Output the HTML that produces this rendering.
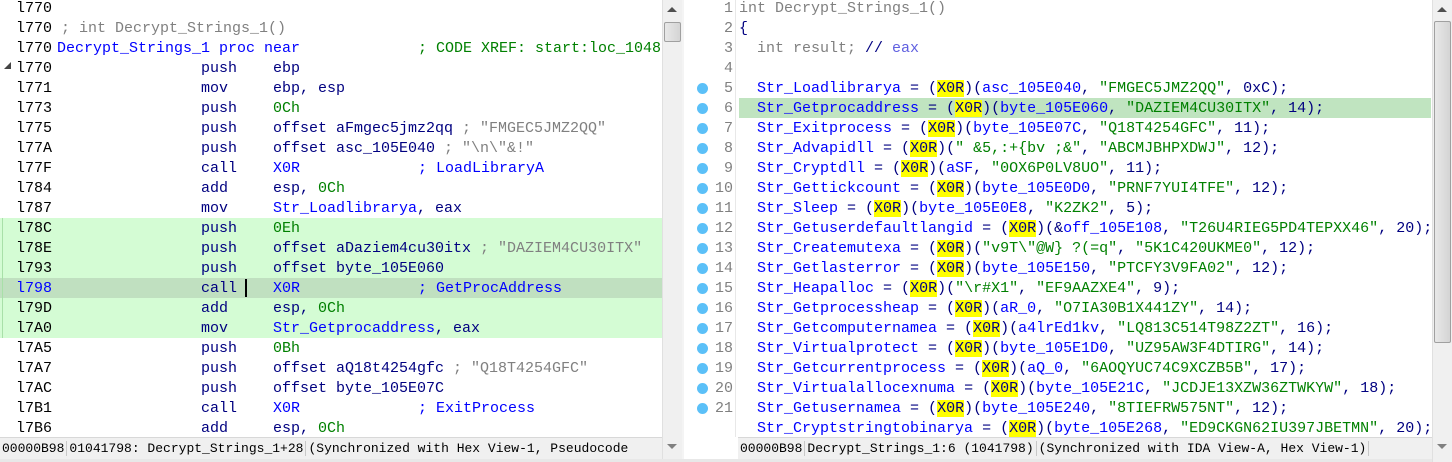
<!DOCTYPE html>
<html><head><meta charset="utf-8"><style>
*{margin:0;padding:0;box-sizing:border-box}
body{width:1452px;height:462px;overflow:hidden;background:#fff;position:relative;font-family:"Liberation Mono",monospace;font-size:15px}
.r{position:absolute;height:20px;line-height:22px;white-space:pre}
.L{position:absolute;left:0;width:662px;height:20px;line-height:22px;white-space:pre}
.L span{position:absolute}
.c1{left:16px}.c2{left:201px}.c3{left:273px}.c4{left:418px}
.m{color:#000080}
.b{color:#0000ff}
.g{color:#008000}
.gr{color:#808080}
.n{color:#000080}
.y{background:#ffff00;color:#000080}
.s{color:#008000}
.st{position:absolute;top:437px;height:22px;background:#f0f0f0;font-size:13px;line-height:22px;white-space:pre;color:#000;border-top:1px solid #d8d8d8}
.st span{border-right:1px solid #c8c8c8;padding:0 2px;position:static}
.dot{position:absolute;width:11px;height:11px;border-radius:50%;background:#5bc0f8;left:697px}
.ln{position:absolute;left:700px;width:33px;text-align:right;color:#808080;height:20px;line-height:22px}
</style></head><body>
<!-- left panel -->
<div style="position:absolute;left:0;top:218px;width:662px;height:120px;background:#d4fcd4"></div>
<div style="position:absolute;left:0;top:278px;width:662px;height:20px;background:#c0e0c0"></div>
<div style="position:absolute;left:2px;top:218px;width:1px;height:120px;background:#a8e0a8"></div>
<div class="L" style="top:-2px"><span class="c1">l770</span></div>
<div class="L" style="top:18px"><span class="c1">l770 <span class="gr" style="position:static">; int Decrypt_Strings_1()</span></span></div>
<div class="L" style="top:38px"><span class="c1">l770</span><span class="b" style="left:57px">Decrypt_Strings_1 proc near</span><span class="g c4">; CODE XREF: start:loc_1048</span></div>
<div style="position:absolute;left:4px;top:62px;width:0;height:0;border-left:7px solid transparent;border-bottom:7px solid #444"></div>
<div class="L" style="top:58px"><span class="c1">l770</span><span class="m c2">push</span><span class="m c3">ebp</span></div>
<div class="L" style="top:78px"><span class="c1">l771</span><span class="m c2">mov</span><span class="m c3">ebp, esp</span></div>
<div class="L" style="top:98px"><span class="c1">l773</span><span class="m c2">push</span><span class="g c3">0Ch</span></div>
<div class="L" style="top:118px"><span class="c1">l775</span><span class="m c2">push</span><span class="m c3">offset aFmgec5jmz2qq <span class="gr" style="position:static">; "FMGEC5JMZ2QQ"</span></span></div>
<div class="L" style="top:138px"><span class="c1">l77A</span><span class="m c2">push</span><span class="m c3">offset asc_105E040 <span class="gr" style="position:static">; "\n\"&amp;!"</span></span></div>
<div class="L" style="top:158px"><span class="c1">l77F</span><span class="m c2">call</span><span class="b c3">X0R</span><span class="b c4">; LoadLibraryA</span></div>
<div class="L" style="top:178px"><span class="c1">l784</span><span class="m c2">add</span><span class="m c3">esp, <span class="g" style="position:static">0Ch</span></span></div>
<div class="L" style="top:198px"><span class="c1">l787</span><span class="m c2">mov</span><span class="c3"><span class="b" style="position:static">Str_Loadlibrarya</span><span class="m" style="position:static">, eax</span></span></div>
<div class="L" style="top:218px"><span class="c1">l78C</span><span class="m c2">push</span><span class="g c3">0Eh</span></div>
<div class="L" style="top:238px"><span class="c1">l78E</span><span class="m c2">push</span><span class="m c3">offset aDaziem4cu30itx <span class="gr" style="position:static">; "DAZIEM4CU30ITX"</span></span></div>
<div class="L" style="top:258px"><span class="c1">l793</span><span class="m c2">push</span><span class="m c3">offset byte_105E060</span></div>
<div class="L" style="top:278px"><span class="c1 b">l798</span><span class="m c2">call</span><span class="b c3">X0R</span><span class="b c4">; GetProcAddress</span></div>
<div style="position:absolute;left:245px;top:279px;width:2px;height:18px;background:#000"></div>
<div class="L" style="top:298px"><span class="c1">l79D</span><span class="m c2">add</span><span class="m c3">esp, <span class="g" style="position:static">0Ch</span></span></div>
<div class="L" style="top:318px"><span class="c1">l7A0</span><span class="m c2">mov</span><span class="c3"><span class="b" style="position:static">Str_Getprocaddress</span><span class="m" style="position:static">, eax</span></span></div>
<div class="L" style="top:338px"><span class="c1">l7A5</span><span class="m c2">push</span><span class="g c3">0Bh</span></div>
<div class="L" style="top:358px"><span class="c1">l7A7</span><span class="m c2">push</span><span class="m c3">offset aQ18t4254gfc <span class="gr" style="position:static">; "Q18T4254GFC"</span></span></div>
<div class="L" style="top:378px"><span class="c1">l7AC</span><span class="m c2">push</span><span class="m c3">offset byte_105E07C</span></div>
<div class="L" style="top:398px"><span class="c1">l7B1</span><span class="m c2">call</span><span class="b c3">X0R</span><span class="b c4">; ExitProcess</span></div>
<div class="L" style="top:418px"><span class="c1">l7B6</span><span class="m c2">add</span><span class="m c3">esp, <span class="g" style="position:static">0Ch</span></span></div>
<!-- left scrollbar -->
<div style="position:absolute;left:662px;top:0;width:20px;height:462px;background:#f0f0f0;border-left:1px solid #e0e0e0"></div>
<div style="position:absolute;left:667px;top:7px;width:0;height:0;border-left:5px solid transparent;border-right:5px solid transparent;border-bottom:5px solid #505050"></div>
<div style="position:absolute;left:664px;top:22px;width:17px;height:20px;background:linear-gradient(90deg,#e8e8e8,#d4d4d4);border:1px solid #a0a0a0;border-radius:2px"></div>
<div style="position:absolute;left:667px;top:444px;width:0;height:0;border-left:5px solid transparent;border-right:5px solid transparent;border-top:5px solid #808080"></div>
<div class="st" style="left:0;width:662px"><span>00000B98</span><span>01041798: Decrypt_Strings_1+28</span><span style="border:none">(Synchronized with Hex View-1, Pseudocode</span></div>
<!-- right panel -->
<div style="position:absolute;left:735px;top:0;width:1px;height:437px;background:#e8e8e8"></div>
<div style="position:absolute;left:739px;top:98px;width:692px;height:20px;background:#c0e4c0"></div>
<div class="ln" style="top:-2px">1</div><div class="ln" style="top:18px">2</div><div class="ln" style="top:38px">3</div><div class="ln" style="top:58px">4</div>
<div class="ln" style="top:78px">5</div><div class="ln" style="top:98px">6</div><div class="ln" style="top:118px">7</div><div class="ln" style="top:138px">8</div>
<div class="ln" style="top:158px">9</div><div class="ln" style="top:178px">10</div><div class="ln" style="top:198px">11</div><div class="ln" style="top:218px">12</div>
<div class="ln" style="top:238px">13</div><div class="ln" style="top:258px">14</div><div class="ln" style="top:278px">15</div><div class="ln" style="top:298px">16</div>
<div class="ln" style="top:318px">17</div><div class="ln" style="top:338px">18</div><div class="ln" style="top:358px">19</div><div class="ln" style="top:378px">20</div>
<div class="ln" style="top:398px">21</div>
<div class="dot" style="top:83px"></div><div class="dot" style="top:103px"></div><div class="dot" style="top:123px"></div><div class="dot" style="top:143px"></div>
<div class="dot" style="top:163px"></div><div class="dot" style="top:183px"></div><div class="dot" style="top:203px"></div><div class="dot" style="top:223px"></div>
<div class="dot" style="top:243px"></div><div class="dot" style="top:263px"></div><div class="dot" style="top:283px"></div><div class="dot" style="top:303px"></div>
<div class="dot" style="top:323px"></div><div class="dot" style="top:343px"></div><div class="dot" style="top:363px"></div><div class="dot" style="top:383px"></div>
<div class="dot" style="top:403px"></div>
<div class="r gr" style="left:739px;top:-2px">int Decrypt_Strings_1()</div>
<div class="r n" style="left:739px;top:18px">{</div>
<div class="r" style="left:739px;top:38px"><span class="gr">  int result; </span><span class="n">// </span><span style="color:#6060e0">eax</span></div>
<div class="r n" style="left:739px;top:78px">  <span class="b">Str_Loadlibrarya</span> = (<span class="y">X0R</span>)(<span class="b">asc_105E040</span>, <span class="s">"FMGEC5JMZ2QQ"</span>, 0xC);</div>
<div class="r n" style="left:739px;top:98px">  <span class="b">Str_Getprocaddress</span> = (<span class="y">X0R</span>)(<span class="b">byte_105E060</span>, <span class="s">"DAZIEM4CU30ITX"</span>, 14);</div>
<div class="r n" style="left:739px;top:118px">  <span class="b">Str_Exitprocess</span> = (<span class="y">X0R</span>)(<span class="b">byte_105E07C</span>, <span class="s">"Q18T4254GFC"</span>, 11);</div>
<div class="r n" style="left:739px;top:138px">  <span class="b">Str_Advapidll</span> = (<span class="y">X0R</span>)(<span class="s">" &amp;5,:+{bv ;&amp;"</span>, <span class="s">"ABCMJBHPXDWJ"</span>, 12);</div>
<div class="r n" style="left:739px;top:158px">  <span class="b">Str_Cryptdll</span> = (<span class="y">X0R</span>)(<span class="b">aSF</span>, <span class="s">"0OX6P0LV8UO"</span>, 11);</div>
<div class="r n" style="left:739px;top:178px">  <span class="b">Str_Gettickcount</span> = (<span class="y">X0R</span>)(<span class="b">byte_105E0D0</span>, <span class="s">"PRNF7YUI4TFE"</span>, 12);</div>
<div class="r n" style="left:739px;top:198px">  <span class="b">Str_Sleep</span> = (<span class="y">X0R</span>)(<span class="b">byte_105E0E8</span>, <span class="s">"K2ZK2"</span>, 5);</div>
<div class="r n" style="left:739px;top:218px">  <span class="b">Str_Getuserdefaultlangid</span> = (<span class="y">X0R</span>)(&amp;<span class="b">off_105E108</span>, <span class="s">"T26U4RIEG5PD4TEPXX46"</span>, 20);</div>
<div class="r n" style="left:739px;top:238px">  <span class="b">Str_Createmutexa</span> = (<span class="y">X0R</span>)(<span class="s">"v9T\"@W} ?(=q"</span>, <span class="s">"5K1C420UKME0"</span>, 12);</div>
<div class="r n" style="left:739px;top:258px">  <span class="b">Str_Getlasterror</span> = (<span class="y">X0R</span>)(<span class="b">byte_105E150</span>, <span class="s">"PTCFY3V9FA02"</span>, 12);</div>
<div class="r n" style="left:739px;top:278px">  <span class="b">Str_Heapalloc</span> = (<span class="y">X0R</span>)(<span class="s">"\r#X1"</span>, <span class="s">"EF9AAZXE4"</span>, 9);</div>
<div class="r n" style="left:739px;top:298px">  <span class="b">Str_Getprocessheap</span> = (<span class="y">X0R</span>)(<span class="b">aR_0</span>, <span class="s">"O7IA30B1X441ZY"</span>, 14);</div>
<div class="r n" style="left:739px;top:318px">  <span class="b">Str_Getcomputernamea</span> = (<span class="y">X0R</span>)(<span class="b">a4lrEd1kv</span>, <span class="s">"LQ813C514T98Z2ZT"</span>, 16);</div>
<div class="r n" style="left:739px;top:338px">  <span class="b">Str_Virtualprotect</span> = (<span class="y">X0R</span>)(<span class="b">byte_105E1D0</span>, <span class="s">"UZ95AW3F4DTIRG"</span>, 14);</div>
<div class="r n" style="left:739px;top:358px">  <span class="b">Str_Getcurrentprocess</span> = (<span class="y">X0R</span>)(<span class="b">aQ_0</span>, <span class="s">"6AOQYUC74C9XCZB5B"</span>, 17);</div>
<div class="r n" style="left:739px;top:378px">  <span class="b">Str_Virtualallocexnuma</span> = (<span class="y">X0R</span>)(<span class="b">byte_105E21C</span>, <span class="s">"JCDJE13XZW36ZTWKYW"</span>, 18);</div>
<div class="r n" style="left:739px;top:398px">  <span class="b">Str_Getusernamea</span> = (<span class="y">X0R</span>)(<span class="b">byte_105E240</span>, <span class="s">"8TIEFRW575NT"</span>, 12);</div>
<div class="r n" style="left:739px;top:418px">  <span class="b">Str_Cryptstringtobinarya</span> = (<span class="y">X0R</span>)(<span class="b">byte_105E268</span>, <span class="s">"ED9CKGN62IU397JBETMN"</span>, 20);</div>
<!-- right scrollbar -->
<div style="position:absolute;left:1432px;top:0;width:20px;height:462px;background:#f0f0f0;border-left:1px solid #e0e0e0"></div>
<div style="position:absolute;left:1437px;top:7px;width:0;height:0;border-left:5px solid transparent;border-right:5px solid transparent;border-bottom:5px solid #505050"></div>
<div style="position:absolute;left:1434px;top:21px;width:17px;height:322px;background:linear-gradient(90deg,#e8e8e8,#d4d4d4);border:1px solid #a0a0a0;border-radius:2px"></div>
<div style="position:absolute;left:1437px;top:444px;width:0;height:0;border-left:5px solid transparent;border-right:5px solid transparent;border-top:5px solid #808080"></div>
<div class="st" style="left:738px;width:694px"><span>00000B98</span><span>Decrypt_Strings_1:6 (1041798)</span><span>(Synchronized with IDA View-A, Hex View-1)</span></div>
<div style="position:absolute;left:682px;top:0;width:2px;height:462px;background:#f4f4f4"></div>
<div style="position:absolute;left:0;top:459px;width:1432px;height:3px;background:#e8e8e8"></div>
</body></html>
